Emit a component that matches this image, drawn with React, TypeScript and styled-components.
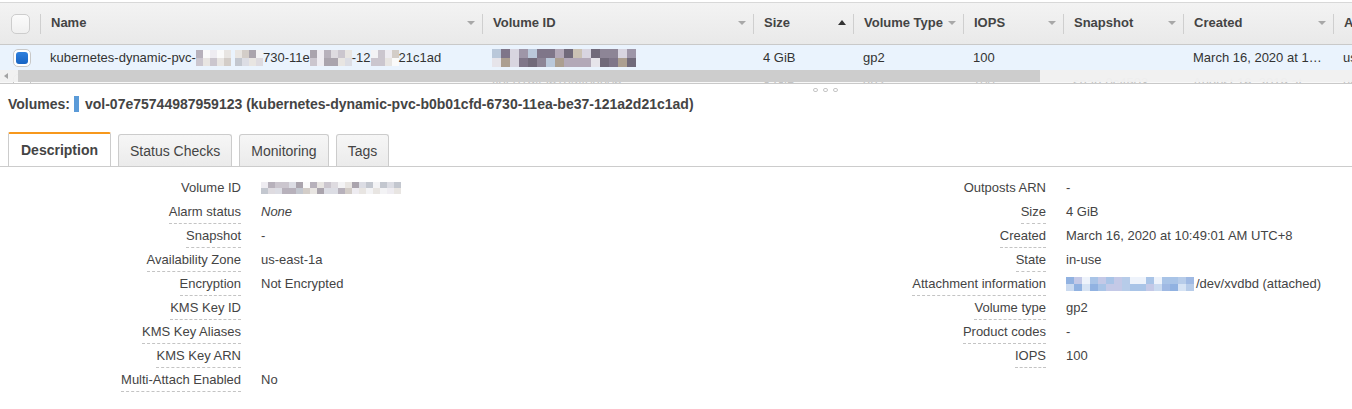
import React from 'react';
import styled, { createGlobalStyle } from 'styled-components';

const GlobalStyle = createGlobalStyle`
  html, body { margin: 0; padding: 0; background: #fff; }
  body {
    font-family: "Liberation Sans", Arial, sans-serif;
    font-size: 13px;
    color: #444;
    overflow: hidden;
  }
  * { box-sizing: border-box; }
`;

const COLS = '40px 442px 271px 100px 110px 100px 120px 150px minmax(0, 1fr)';

const Page = styled.div`
  width: 1352px;
  overflow: hidden;
  padding-top: 2px;
`;

const HeaderRow = styled.div`
  display: grid;
  grid-template-columns: ${COLS};
  height: 43px;
  border-top: 1px solid #d8d8d8;
  border-bottom: 1px solid #c9c9c9;
  background: linear-gradient(#f3f3f3, #e9e9e9);
`;

const HeaderCell = styled.div<{ $divider?: boolean }>`
  position: relative;
  display: flex;
  align-items: center;
  min-width: 0;
  overflow: hidden;
  padding-left: 11px;
  padding-right: 7px;
  padding-bottom: 2px;
  font-weight: bold;
  color: #444;
  white-space: nowrap;
  &::before {
    content: '';
    display: ${(p) => (p.$divider ? 'block' : 'none')};
    position: absolute;
    left: 0;
    top: 11px;
    bottom: 10px;
    width: 1px;
    background: #cfcfcf;
  }
`;

const SortArrow = styled.span<{ $up?: boolean }>`
  margin-left: auto;
  width: 0;
  height: 0;
  border-left: 4px solid transparent;
  border-right: 4px solid transparent;
  ${(p) =>
    p.$up
      ? 'border-bottom: 5px solid #333;'
      : 'border-top: 4px solid #a8a8a8;'}
`;

const CheckCell = styled.div<{ $pad: number }>`
  display: flex;
  align-items: center;
  padding-left: ${(p) => p.$pad}px;
`;

const HeaderCheckbox = styled.span`
  width: 19px;
  height: 20px;
  border: 1px solid #cdcdcd;
  border-radius: 5px;
  background: linear-gradient(#fbfbfb, #f0f0f0);
`;

const RowCheckbox = styled.span<{ $checked?: boolean }>`
  width: 18px;
  height: 18px;
  border: 1px solid #c8c8c8;
  border-radius: 5px;
  background: #fff;
  display: flex;
  align-items: center;
  justify-content: center;
  &::after {
    content: '';
    display: ${(p) => (p.$checked ? 'block' : 'none')};
    width: 12px;
    height: 12px;
    border-radius: 3px;
    background: linear-gradient(#2f80dd, #1764c4);
  }
`;

const BodyRow = styled.div<{ $ghost?: boolean }>`
  display: grid;
  grid-template-columns: ${COLS};
  height: 25px;
  background: ${(p) => (p.$ghost ? '#f8f8f8' : '#eaf3fd')};
  color: ${(p) => (p.$ghost ? '#c4c4c4' : '#333')};
`;

const BodyCell = styled.div`
  display: flex;
  align-items: center;
  min-width: 0;
  overflow: hidden;
  padding: 0 10px;
  white-space: nowrap;
`;

const Ellipsis = styled.span`
  display: block;
  overflow: hidden;
  text-overflow: ellipsis;
  white-space: nowrap;
`;

const Strip = styled.div`
  position: relative;
  height: 14px;
  overflow: hidden;
  border-bottom: 1px solid #c9c9c9;
`;

const Scrollbar = styled.div`
  position: absolute;
  top: 0;
  left: 0;
  right: 0;
  height: 12px;
  background: rgba(240, 240, 240, 0.94);
  display: flex;
  align-items: stretch;
`;

const ScrollArrow = styled.span`
  width: 18px;
  display: flex;
  align-items: center;
  justify-content: center;
  &::before {
    content: '';
    width: 0;
    height: 0;
    border-top: 3px solid transparent;
    border-bottom: 3px solid transparent;
    border-right: 4px solid #a3a3a3;
    margin-right: 6px;
  }
`;

const ScrollThumb = styled.span`
  width: 1022px;
  background: #cdcdcd;
`;

const Splitter = styled.div`
  height: 11px;
  display: flex;
  align-items: center;
  gap: 5px;
  padding-left: 813px;
`;

const SplitDot = styled.span`
  width: 5px;
  height: 4px;
  border: 1px solid #c6c6c6;
  border-radius: 2px;
`;

const TitleBar = styled.div`
  display: flex;
  align-items: center;
  height: 16px;
  margin-top: 1px;
  padding-left: 8px;
  font-size: 14px;
  font-weight: bold;
  color: #444;
  white-space: nowrap;
`;

const TitleMark = styled.span`
  width: 5px;
  height: 16px;
  margin: 0 6px 0 4px;
  background: #5b9bd8;
`;

const TabBar = styled.div`
  display: flex;
  align-items: flex-end;
  gap: 7px;
  margin-top: 20px;
  padding-left: 8px;
  border-bottom: 1px solid #cccccc;
`;

const Tab = styled.div<{ $active?: boolean }>`
  display: flex;
  align-items: center;
  padding: 0 11px;
  font-size: 14px;
  white-space: nowrap;
  color: #444;
  border: 1px solid #cccccc;
  border-bottom: none;
  ${(p) =>
    p.$active
      ? `
    height: 34px;
    padding: 0 12px;
    background: #fff;
    border-top: 2px solid #f7981c;
    font-weight: bold;
    border-radius: 2px 2px 0 0;
  `
      : `
    height: 32px;
    background: linear-gradient(#f6f6f6, #ebebeb);
    border-radius: 3px 3px 0 0;
  `}
`;

const Pane = styled.div`
  display: grid;
  grid-template-columns: 1fr 1fr;
  padding-top: 10px;
`;

const DetailList = styled.div<{ $labelWidth: number }>`
  display: grid;
  grid-template-columns: ${(p) => p.$labelWidth}px minmax(0, 1fr);
  column-gap: 20px;
  grid-auto-rows: 24px;
  align-content: start;
`;

const LabelCell = styled.div`
  text-align: right;
  white-space: nowrap;
`;

const LabelText = styled.span<{ $hint?: boolean }>`
  display: inline-block;
  padding: 3px 0 3px;
  line-height: 16px;
  color: #444;
  border-bottom: 1px dashed ${(p) => (p.$hint ? '#c4c4c4' : 'transparent')};
`;

const ValueCell = styled.div<{ $italic?: boolean }>`
  display: flex;
  align-items: center;
  height: 22px;
  line-height: 16px;
  color: #444;
  white-space: nowrap;
  font-style: ${(p) => (p.$italic ? 'italic' : 'normal')};
`;

const MosaicGrid = styled.span<{ $cw: number; $ch: number; $rows: number }>`
  display: inline-grid;
  grid-auto-flow: column;
  grid-template-rows: repeat(${(p) => p.$rows}, ${(p) => p.$ch}px);
  grid-auto-columns: ${(p) => p.$cw}px;
  vertical-align: middle;
  flex-shrink: 0;
`;

const Gap = styled.span<{ $w: number }>`
  display: inline-block;
  width: ${(p) => p.$w}px;
  flex-shrink: 0;
`;

const GRAY = ['#f3f3f5', '#dedbe0', '#cbc6ce', '#b7b1bb', '#e8e5e2', '#d3cdc8', '#aaa4ad', '#eeecf1', '#dcdde4', '#c3c7cf', '#fafafa'];
const DARK = ['#9e96a8', '#7f7689', '#b3a9b8', '#8d8596', '#cbc2b4', '#ac9f91', '#d8d5e0', '#716a7a', '#bac8da', '#e6e4ea'];
const BLUE = ['#cadaf0', '#a9c4e7', '#91b2e1', '#e0eaf7', '#b7cce9', '#9fb9e3', '#eef3fb', '#c4c9e7', '#d6e3f4'];

function cells(seed: number, count: number, palette: string[]): string[] {
  let s = seed;
  const out: string[] = [];
  for (let i = 0; i < count; i++) {
    s = (s * 9301 + 49297) % 233280;
    out.push(palette[Math.floor((s / 233280) * palette.length)]);
  }
  return out;
}

function Mosaic({
  seed,
  cols,
  rows = 2,
  cw = 7,
  ch = 8,
  palette = GRAY,
}: {
  seed: number;
  cols: number;
  rows?: number;
  cw?: number;
  ch?: number;
  palette?: string[];
}) {
  const list = cells(seed, cols * rows, palette);
  return (
    <MosaicGrid $cw={cw} $ch={ch} $rows={rows} aria-hidden>
      {list.map((c, i) => (
        <span key={i} style={{ background: c }} />
      ))}
    </MosaicGrid>
  );
}

const headers: { label: string; up?: boolean; arrow?: boolean }[] = [
  { label: 'Name', arrow: true },
  { label: 'Volume ID', arrow: true },
  { label: 'Size', up: true, arrow: true },
  { label: 'Volume Type', arrow: true },
  { label: 'IOPS', arrow: true },
  { label: 'Snapshot', arrow: true },
  { label: 'Created', arrow: true },
  { label: 'Attachment Information', arrow: false },
];

type Detail = { label: string; value?: React.ReactNode; hint?: boolean; italic?: boolean };

const leftDetails: Detail[] = [
  { label: 'Volume ID', value: <Mosaic seed={11} cols={20} cw={7} ch={6} />, hint: false },
  { label: 'Alarm status', value: 'None', hint: true, italic: true },
  { label: 'Snapshot', value: '-', hint: true },
  { label: 'Availability Zone', value: 'us-east-1a', hint: true },
  { label: 'Encryption', value: 'Not Encrypted', hint: true },
  { label: 'KMS Key ID', value: '', hint: true },
  { label: 'KMS Key Aliases', value: '', hint: true },
  { label: 'KMS Key ARN', value: '', hint: true },
  { label: 'Multi-Attach Enabled', value: 'No', hint: true },
];

const rightDetails: Detail[] = [
  { label: 'Outposts ARN', value: '-', hint: false },
  { label: 'Size', value: '4 GiB', hint: true },
  { label: 'Created', value: 'March 16, 2020 at 10:49:01 AM UTC+8', hint: true },
  { label: 'State', value: 'in-use', hint: true },
  {
    label: 'Attachment information',
    value: (
      <>
        <Mosaic seed={77} cols={16} cw={8} ch={7} palette={BLUE} />
        <Gap $w={2} />
        /dev/xvdbd (attached)
      </>
    ),
    hint: true,
  },
  { label: 'Volume type', value: 'gp2', hint: true },
  { label: 'Product codes', value: '-', hint: true },
  { label: 'IOPS', value: '100', hint: true },
];

function Details({ items, labelWidth }: { items: Detail[]; labelWidth: number }) {
  return (
    <DetailList $labelWidth={labelWidth}>
      {items.map((d) => (
        <React.Fragment key={d.label}>
          <LabelCell>
            <LabelText $hint={d.hint}>{d.label}</LabelText>
          </LabelCell>
          <ValueCell $italic={d.italic}>{d.value}</ValueCell>
        </React.Fragment>
      ))}
    </DetailList>
  );
}

export default function App() {
  return (
    <Page>
      <GlobalStyle />
      <HeaderRow>
        <CheckCell $pad={11}>
          <HeaderCheckbox />
        </CheckCell>
        {headers.map((h) => (
          <HeaderCell key={h.label} $divider>
            {h.label}
            {h.arrow && <SortArrow $up={h.up} />}
          </HeaderCell>
        ))}
      </HeaderRow>

      <BodyRow>
        <CheckCell $pad={13}>
          <RowCheckbox $checked />
        </CheckCell>
        <BodyCell>
          kubernetes-dynamic-pvc-
          <Mosaic seed={3} cols={5} cw={7} ch={8} />
          <Gap $w={4} />
          <Mosaic seed={5} cols={4} cw={7} ch={8} />
          730-11e
          <Mosaic seed={9} cols={6} cw={7} ch={8} />
          -12
          <Mosaic seed={21} cols={4} cw={7} ch={8} />
          21c1ad
        </BodyCell>
        <BodyCell>
          <Mosaic seed={41} cols={16} cw={9} ch={9} palette={DARK} />
        </BodyCell>
        <BodyCell>4 GiB</BodyCell>
        <BodyCell>gp2</BodyCell>
        <BodyCell>100</BodyCell>
        <BodyCell />
        <BodyCell>
          <Ellipsis>March 16, 2020 at 10:49:01 AM UTC+8</Ellipsis>
        </BodyCell>
        <BodyCell>us-east-1a</BodyCell>
      </BodyRow>

      <Strip>
        <BodyRow $ghost>
          <CheckCell $pad={13}>
            <RowCheckbox />
          </CheckCell>
          <BodyCell />
          <BodyCell>vol-0794a61e540db06</BodyCell>
          <BodyCell>8 GiB</BodyCell>
          <BodyCell>gp2</BodyCell>
          <BodyCell>100</BodyCell>
          <BodyCell>snap-0c4503</BodyCell>
          <BodyCell>
            <Ellipsis>August 16, 2019 at 3:12:40 PM UTC+8</Ellipsis>
          </BodyCell>
          <BodyCell>us-east-1a</BodyCell>
        </BodyRow>
        <Scrollbar>
          <ScrollArrow />
          <ScrollThumb />
        </Scrollbar>
      </Strip>

      <Splitter>
        <SplitDot />
        <SplitDot />
        <SplitDot />
      </Splitter>

      <TitleBar>
        Volumes:
        <TitleMark />
        vol-07e75744987959123 (kubernetes-dynamic-pvc-b0b01cfd-6730-11ea-be37-121a2d21c1ad)
      </TitleBar>

      <TabBar>
        <Tab $active>Description</Tab>
        <Tab>Status Checks</Tab>
        <Tab>Monitoring</Tab>
        <Tab>Tags</Tab>
      </TabBar>

      <Pane>
        <Details items={leftDetails} labelWidth={241} />
        <Details items={rightDetails} labelWidth={370} />
      </Pane>
    </Page>
  );
}
